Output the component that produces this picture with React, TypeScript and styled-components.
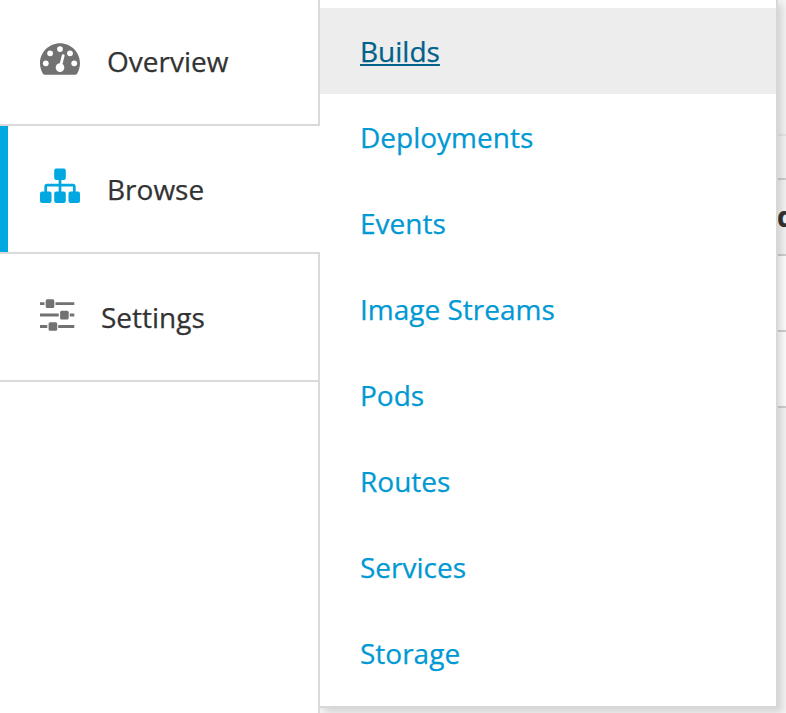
import React from "react";
import styled, { createGlobalStyle, css } from "styled-components";

const GlobalStyle = createGlobalStyle`
  *, *::before, *::after { box-sizing: border-box; }
  body {
    margin: 0;
    background: #f5f5f5;
    font-family: "Open Sans", sans-serif;
    font-size: 28px;
    -webkit-text-stroke: 0.25px currentColor;
  }
`;

const Page = styled.div`
  position: relative;
  display: flex;
  width: 786px;
  height: 713px;
  overflow: hidden;
`;

const Sidebar = styled.nav`
  position: relative;
  z-index: 2;
  display: flex;
  flex-direction: column;
  width: 320px;
  flex: none;
  background: #fff;
`;

const NavItem = styled.a<{ $active?: boolean; $first?: boolean; $gap: number }>`
  display: flex;
  align-items: center;
  gap: ${(p) => p.$gap}px;
  height: ${(p) => (p.$first ? 126 : 128)}px;
  padding: ${(p) => (p.$first ? 0 : 2)}px 0 4px 40px;
  color: #333;
  text-decoration: none;
  border-right: 2px solid #dadada;
  box-shadow: inset 0 -2px #dadada;
  ${(p) =>
    p.$active &&
    css`
      border-right: 0;
      border-left: 8px solid #00a8e1;
      border-image: linear-gradient(#00a8e1 126px, #dadada 126px) 0 0 0 8;
      padding-left: 32px;
    `}
`;

const NavCorner = styled.div`
  flex: none;
  width: 2px;
  height: 2px;
  margin: -2px 0 0 auto;
  background: #dadada;
`;

const NavFill = styled.div`
  flex: 1;
  border-right: 2px solid #dadada;
`;

const Icon = styled.svg<{ $lift: number }>`
  display: block;
  flex: none;
  margin-bottom: ${(p) => p.$lift}px;
`;

const Flyout = styled.ul`
  position: absolute;
  z-index: 1;
  left: 320px;
  top: 0;
  width: 458px;
  height: 708px;
  margin: 0;
  padding: 8px 0 10px;
  list-style: none;
  background: #fff;
  border: solid #d7d7d7;
  border-width: 0 2px 2px 0;
  box-shadow: 4px 4px 8px rgba(0, 0, 0, 0.15);
`;

const FlyoutItem = styled.li<{ $hover?: boolean }>`
  display: flex;
  align-items: center;
  height: 86px;
  padding: 0 40px;
  color: ${(p) => (p.$hover ? "#00618a" : "#0099d3")};
  background: ${(p) => (p.$hover ? "#ededed" : "transparent")};
`;

const FlyoutLabel = styled.span<{ $hover?: boolean }>`
  line-height: 40px;
  ${(p) =>
    p.$hover &&
    css`
      text-decoration: underline;
      text-decoration-thickness: 2px;
      text-underline-offset: 2px;
      text-decoration-skip-ink: none;
    `}
`;

const Content = styled.main`
  flex: 1;
  min-width: 0;
`;

const Toolbar = styled.div`
  height: 136px;
  border-bottom: 2px solid #e8e8e8;
`;

const TableHead = styled.div`
  display: flex;
  align-items: center;
  height: 78px;
  margin-top: 42px;
  padding: 0 0 2px 457px;
  border: solid #d1d1d1;
  border-width: 2px 0;
  font-weight: 700;
  color: #333;
`;

const TableRow = styled.div`
  height: 76px;
  background: #fff;
  border-bottom: 2px solid #d1d1d1;
`;

function GaugeIcon() {
  return (
    <Icon $lift={2} width="40" height="34" viewBox="0 0 40 34" fill="#727272">
      <path d="M20 0.3C9 0.3 0 9.2 0 20.2c0 3.9 1.1 7.5 3.1 10.7.3.5.8.8 1.4.8h31c.6 0 1.1-.3 1.4-.8 2-3.2 3.1-6.8 3.1-10.7C40 9.2 31 .3 20 .3Z" />
      <g fill="#fff">
        <circle cx="5.8" cy="20.3" r="2.9" />
        <circle cx="10.1" cy="10.3" r="2.9" />
        <circle cx="20" cy="6.1" r="2.9" />
        <circle cx="30" cy="10.3" r="2.9" />
        <circle cx="34.2" cy="20.3" r="2.9" />
        <circle cx="20" cy="24.6" r="4.3" />
      </g>
      <path d="m20.7 22.5 2.5-9.8" fill="none" stroke="#fff" strokeWidth="2.8" strokeLinecap="round" />
    </Icon>
  );
}

function SitemapIcon() {
  return (
    <Icon $lift={6} width="40" height="38" viewBox="0 0 40 38" fill="#00a8e1">
      <rect x="14.2" y="1.5" width="11.6" height="11.5" rx="2" />
      <rect x="0" y="24.5" width="11.5" height="11.5" rx="2" />
      <rect x="14.2" y="24.5" width="11.6" height="11.5" rx="2" />
      <rect x="28.5" y="24.5" width="11.5" height="11.5" rx="2" />
      <path d="M20 12v13M5.7 25v-5.5q0-1.3 1.3-1.3h26q1.3 0 1.3 1.3V25" fill="none" stroke="#00a8e1" strokeWidth="2.7" />
    </Icon>
  );
}

function SlidersIcon() {
  return (
    <Icon $lift={4} width="35" height="34" viewBox="0 0 35 34" fill="#727272">
      <path d="M0 4.2h4.5v2.9H0zM15.5 4.2h18.8v2.9H15.5zM0 15.6h18.8v2.9H0zM29.8 15.6h4.5v2.9h-4.5zM0 27.1h7.3V30H0zM18.2 27.1h16.1V30H18.2z" />
      <rect x="5.7" y="1.3" width="8.6" height="8.6" rx="1.5" />
      <rect x="20.1" y="12.8" width="8.6" height="8.6" rx="1.5" />
      <rect x="8.6" y="24.2" width="8.6" height="8.6" rx="1.5" />
    </Icon>
  );
}

const menu = ["Builds", "Deployments", "Events", "Image Streams", "Pods", "Routes", "Services", "Storage"];

export default function App() {
  return (
    <>
      <GlobalStyle />
      <Page>
        <Sidebar>
          <NavItem $first $gap={27}>
            <GaugeIcon />
            <span>Overview</span>
          </NavItem>
          <NavItem $active $gap={27}>
            <SitemapIcon />
            <span>Browse</span>
          </NavItem>
          <NavCorner />
          <NavItem $gap={26}>
            <SlidersIcon />
            <span>Settings</span>
          </NavItem>
          <NavFill />
        </Sidebar>
        <Content>
          <Toolbar />
          <TableHead>d</TableHead>
          <TableRow />
          <TableRow />
        </Content>
        <Flyout>
          {menu.map((label, index) => (
            <FlyoutItem key={label} $hover={index === 0}>
              <FlyoutLabel $hover={index === 0}>{label}</FlyoutLabel>
            </FlyoutItem>
          ))}
        </Flyout>
      </Page>
    </>
  );
}
